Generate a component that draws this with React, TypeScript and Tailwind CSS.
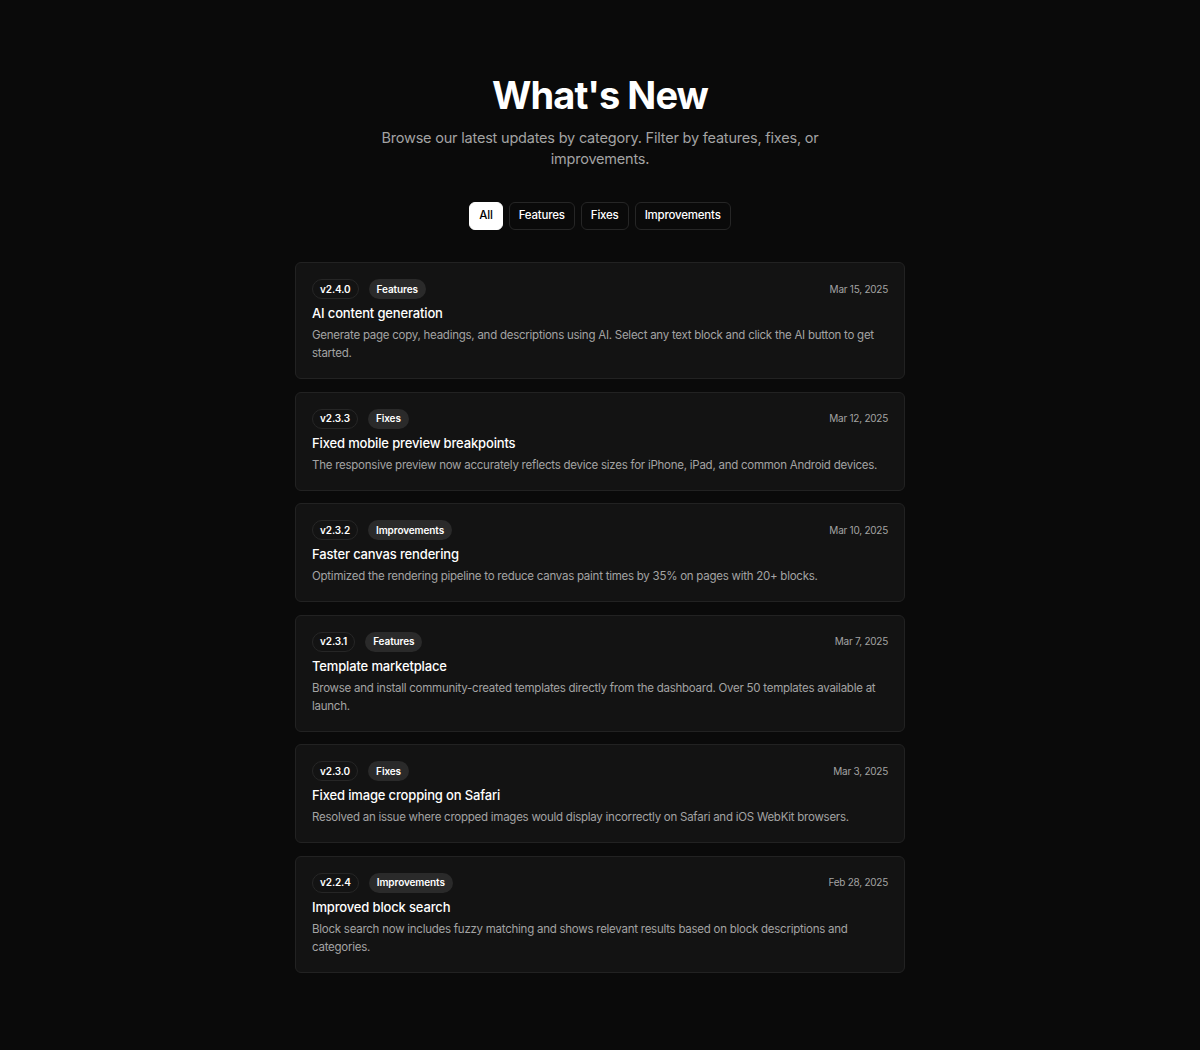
import { useState } from "react";

// TYPES
type Category = "Features" | "Fixes" | "Improvements";
type Filter = "All" | Category;

type Update = {
    version: string;
    category: Category;
    date: string;
    title: string;
    description: string;
};

const updates: Update[] = [
    {
        version: "v2.4.0",
        category: "Features",
        date: "Mar 15, 2025",
        title: "AI content generation",
        description:
            "Generate page copy, headings, and descriptions using AI. Select any text block and click the AI button to get started.",
    },
    {
        version: "v2.3.3",
        category: "Fixes",
        date: "Mar 12, 2025",
        title: "Fixed mobile preview breakpoints",
        description:
            "The responsive preview now accurately reflects device sizes for iPhone, iPad, and common Android devices.",
    },
    {
        version: "v2.3.2",
        category: "Improvements",
        date: "Mar 10, 2025",
        title: "Faster canvas rendering",
        description:
            "Optimized the rendering pipeline to reduce canvas paint times by 35% on pages with 20+ blocks.",
    },
    {
        version: "v2.3.1",
        category: "Features",
        date: "Mar 7, 2025",
        title: "Template marketplace",
        description:
            "Browse and install community-created templates directly from the dashboard. Over 50 templates available at launch.",
    },
    {
        version: "v2.3.0",
        category: "Fixes",
        date: "Mar 3, 2025",
        title: "Fixed image cropping on Safari",
        description:
            "Resolved an issue where cropped images would display incorrectly on Safari and iOS WebKit browsers.",
    },
    {
        version: "v2.2.4",
        category: "Improvements",
        date: "Feb 28, 2025",
        title: "Improved block search",
        description:
            "Block search now includes fuzzy matching and shows relevant results based on block descriptions and categories.",
    },
];

const filters: Filter[] = ["All", "Features", "Fixes", "Improvements"];

const UpdateCard = ({ update }: { update: Update }) => (
    <div className="rounded-md border border-[#222222] bg-[#131313] p-4">
        <div className="flex items-center justify-between h-5">
            <div className="flex items-center gap-2.5">
                <span className="h-5 flex items-center rounded-full border border-[#262626] px-[7px] text-[10px] font-semibold tracking-[-0.1px] text-white">
                    {update.version}
                </span>
                <span className="h-5 flex items-center rounded-full bg-[#2a2a2a] px-2 text-[10px] font-semibold tracking-[-0.1px] text-white">
                    {update.category}
                </span>
            </div>
            <span className="text-[10px] tracking-[-0.25px] text-[#a3a3a3]">
                {update.date}
            </span>
        </div>
        <h3 className="mt-1 text-[13px] leading-5 font-medium tracking-[-0.15px] text-white">
            {update.title}
        </h3>
        <p className="mt-[3px] text-[11.5px] leading-[18px] tracking-[-0.25px] text-[#a3a3a3]">
            {update.description}
        </p>
    </div>
);

export default function App() {
    const [filter, setFilter] = useState<Filter>("All");

    const shown = updates.filter((u) => filter === "All" || u.category === filter);

    return (
        <div
            className="min-h-screen bg-[#0a0a0a] pt-[71px] pb-20 flex flex-col items-center"
            style={{ fontFamily: "Inter, 'Noto Sans', sans-serif" }}
        >
            <h1 className="text-[38px] leading-[48px] font-bold tracking-tight text-white">
                What's New
            </h1>
            <p className="mt-2 max-w-md text-center text-[14.5px] leading-[21px] tracking-[-0.2px] text-[#a3a3a3]">
                Browse our latest updates by category. Filter by features, fixes, or
                improvements.
            </p>

            {/* filter buttons */}
            <div className="mt-[33px] flex items-center gap-1.5">
                {filters.map((f) => (
                    <button
                        key={f}
                        onClick={() => setFilter(f)}
                        className={`h-7 rounded-md px-[9px] text-[11.5px] font-medium tracking-[-0.2px] ${
                            filter === f
                                ? "bg-white text-black border border-white"
                                : "bg-[#0a0a0a] text-white border border-[#262626]"
                        }`}
                    >
                        {f}
                    </button>
                ))}
            </div>

            <div className="mt-8 w-[610px] flex flex-col gap-[12.5px]">
                {shown.map((u) => (
                    <UpdateCard key={u.version} update={u} />
                ))}
            </div>
        </div>
    );
}
